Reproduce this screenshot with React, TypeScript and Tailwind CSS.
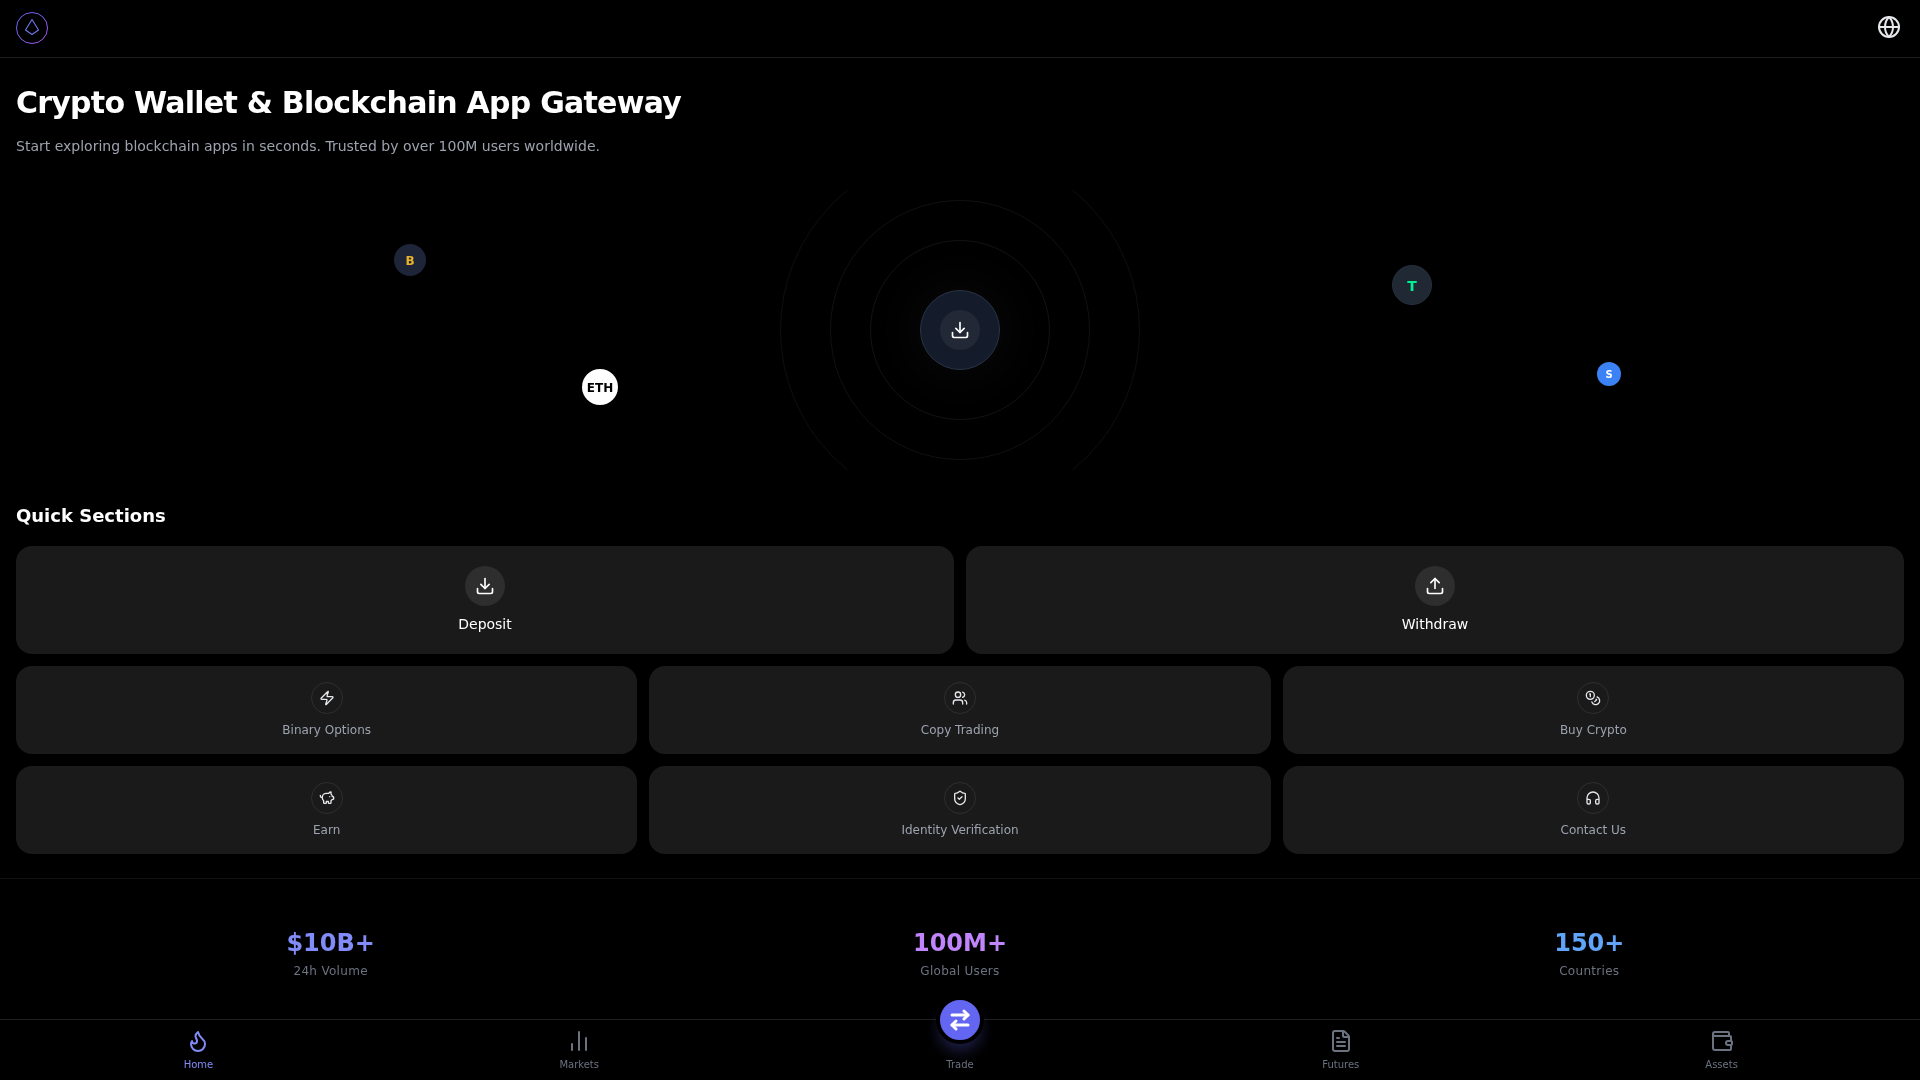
import { Download, Upload, Zap, Users, Coins, PiggyBank, ShieldCheck, Headphones, Globe, Flame, BarChart2, ArrowRightLeft, FileText, Wallet } from "lucide-react";
import type { ComponentType } from "react";

type Icon = ComponentType<{ size?: number; strokeWidth?: number; className?: string }>;

function BigCard({ icon: I, label }: { icon: Icon; label: string }) {
  return (
    <div className="h-[108px] rounded-2xl bg-[#1a1a1a] pt-5 flex flex-col items-center">
      <div className="w-10 h-10 rounded-full bg-[#2e2e2e] flex items-center justify-center text-white">
        <I size={20} />
      </div>
      <div className="mt-2 text-sm leading-5 text-white">{label}</div>
    </div>
  );
}

function SmallCard({ icon: I, label }: { icon: Icon; label: string }) {
  return (
    <div className="h-[88px] rounded-2xl bg-[#1a1a1a] pt-4 flex flex-col items-center">
      <div className="w-8 h-8 rounded-full border border-[#2e2e2e] flex items-center justify-center text-[#e5e7eb]">
        <I size={16} />
      </div>
      <div className="mt-2 text-xs leading-4 text-[#9ca3af]">{label}</div>
    </div>
  );
}

function Stat({ value, label, color }: { value: string; label: string; color: string }) {
  return (
    <div className="flex flex-col items-center">
      <div className={`text-2xl leading-8 font-bold ${color}`}>{value}</div>
      <div className="mt-1 text-xs leading-4 tracking-[0.3px] text-[#6b7280]">{label}</div>
    </div>
  );
}

function NavItem({ icon: I, label, active }: { icon: Icon; label: string; active?: boolean }) {
  return (
    <div className={`flex flex-col items-center pt-[9px] ${active ? "text-[#818cf8]" : "text-[#6b7280]"}`}>
      <I size={24} />
      <div className="mt-1 text-[10px] leading-[15px]">{label}</div>
    </div>
  );
}

export default function App() {
  return (
    <div className="bg-black">
    <div className="min-h-screen text-white flex flex-col overflow-hidden font-['DejaVu_Sans',sans-serif] will-change-transform">
      <header className="h-[58px] shrink-0 border-b border-[#1f1f1f] px-4 flex items-center justify-between">
        <div className="w-8 h-8 mb-[1px]">
          <svg viewBox="0 0 32 32" width="32" height="32" fill="none">
            <defs>
              <linearGradient id="lg" x1="0" y1="0" x2="1" y2="1">
                <stop offset="0" stopColor="#6366f1" />
                <stop offset="1" stopColor="#a855f7" />
              </linearGradient>
            </defs>
            <circle cx="16" cy="16" r="15.5" stroke="url(#lg)" />
            <path d="M16 7.5 L22.5 18 L16 22.5 L9.5 18 Z" stroke="#6f76f3" strokeWidth="1.1" strokeLinejoin="round" />
          </svg>
        </div>
        <Globe size={24} className="text-[#e5e7eb] mr-[3px] mb-[3px]" />
      </header>

      <section className="px-4 pt-[27px] shrink-0">
        <h1 className="text-3xl leading-9 font-bold tracking-tight">Crypto Wallet &amp; Blockchain App Gateway</h1>
        <p className="mt-[15px] text-sm leading-5 text-[#9ca3af]">Start exploring blockchain apps in seconds. Trusted by over 100M users worldwide.</p>
      </section>

      <section className="relative mt-[34px] h-[280px] shrink-0 overflow-hidden flex items-center justify-center">
        <div className="absolute left-1/2 top-1/2 -ml-[180px] -mt-[180px] w-[360px] h-[360px] rounded-full border border-[#0f0f0f]" />
        <div className="absolute left-1/2 top-1/2 -ml-[130px] -mt-[130px] w-[260px] h-[260px] rounded-full border border-[#111111]" />
        <div className="absolute left-1/2 top-1/2 -ml-[90px] -mt-[90px] w-[180px] h-[180px] rounded-full border border-[#131313]" />
        <div className="relative w-20 h-20 rounded-full bg-[#141c2b] border border-[#2a3446] flex items-center justify-center shadow-[0_0_60px_rgba(255,255,255,0.05)]">
          <div className="w-10 h-10 rounded-full bg-[#222836] flex items-center justify-center text-white">
            <Download size={20} />
          </div>
        </div>
        <div className="absolute left-[394px] top-[54px] w-8 h-8 rounded-full bg-[#1e2538] text-[#eab32a] flex items-center justify-center text-xs font-bold pt-[1px]">B</div>
        <div className="absolute left-[582px] top-[179px] w-9 h-9 rounded-full bg-white text-black flex items-center justify-center text-xs font-bold pt-[1px]">ETH</div>
        <div className="absolute left-[1392px] top-[75px] w-10 h-10 rounded-full bg-[#1f2833] border border-[#263040] text-[#00f090] flex items-center justify-center text-sm font-bold pt-[1px]">T</div>
        <div className="absolute left-[1597px] top-[172px] w-6 h-6 rounded-full bg-[#3b82f6] text-white flex items-center justify-center text-[10px] font-bold">S</div>
      </section>

      <section className="px-4 mt-8 shrink-0">
        <h2 className="text-lg leading-7 font-bold">Quick Sections</h2>
        <div className="mt-4 grid grid-cols-2 gap-3">
          <BigCard icon={Download} label="Deposit" />
          <BigCard icon={Upload} label="Withdraw" />
        </div>
        <div className="mt-3 grid grid-cols-3 gap-3">
          <SmallCard icon={Zap} label="Binary Options" />
          <SmallCard icon={Users} label="Copy Trading" />
          <SmallCard icon={Coins} label="Buy Crypto" />
          <SmallCard icon={PiggyBank} label="Earn" />
          <SmallCard icon={ShieldCheck} label="Identity Verification" />
          <SmallCard icon={Headphones} label="Contact Us" />
        </div>
      </section>

      <section className="mt-6 border-t border-[#111111] px-4 pt-12 grid grid-cols-3 shrink-0">
        <Stat value="$10B+" label="24h Volume" color="text-[#818cf8]" />
        <Stat value="100M+" label="Global Users" color="text-[#c084fc]" />
        <Stat value="150+" label="Countries" color="text-[#60a5fa]" />
      </section>

      <nav className="relative mt-auto h-[61px] shrink-0 border-t border-[#1f1f1f] px-2 grid grid-cols-5">
        <NavItem icon={Flame} label="Home" active />
        <NavItem icon={BarChart2} label="Markets" />
        <div className="flex flex-col items-center justify-end pb-[8px] text-[#6b7280]">
          <div className="text-[10px] leading-[15px]">Trade</div>
        </div>
        <NavItem icon={FileText} label="Futures" />
        <NavItem icon={Wallet} label="Assets" />
        <div className="absolute left-1/2 -top-6 -ml-6 w-12 h-12 rounded-full bg-[#6366f1] border-4 border-black text-white flex items-center justify-center shadow-[0_10px_15px_-3px_rgba(99,102,241,0.3)]">
          <ArrowRightLeft size={24} strokeWidth={3} />
        </div>
      </nav>
    </div>
    </div>
  );
}
